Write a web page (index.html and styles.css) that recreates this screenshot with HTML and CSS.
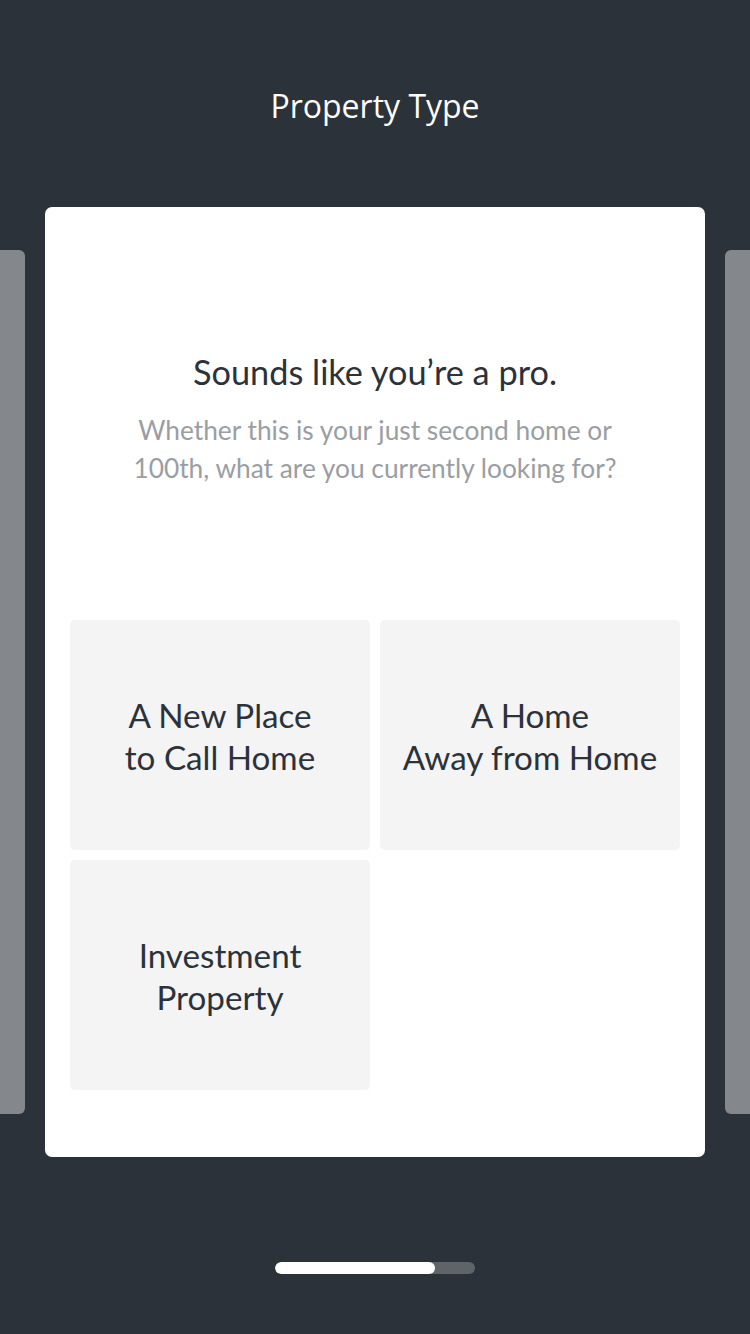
FILE: index.html
```html
<!DOCTYPE html>
<html>
<head>
<meta charset="utf-8">
<link rel="stylesheet" href="styles.css">
</head>
<body>
<div class="screen">
  <header class="topbar"><h1 class="title">Property Type</h1></header>
  <div class="carousel">
    <div class="peek peek-left"></div>
    <section class="card">
      <h2 class="heading">Sounds like you’re a pro.</h2>
      <p class="sub">Whether this is your just second home or<br>100th, what are you currently looking for?</p>
      <div class="options">
        <div class="option">A New Place<br>to Call Home</div>
        <div class="option">A Home<br>Away from Home</div>
        <div class="option">Investment<br>Property</div>
      </div>
    </section>
    <div class="peek peek-right"></div>
  </div>
  <div class="progress"><div class="progress-fill"></div></div>
</div>
</body>
</html>
```
FILE: styles.css
```css
html, body {
  margin: 0;
  padding: 0;
  background: #2c323a;
}
.screen {
  width: 750px;
  height: 1334px;
  overflow: hidden;
  background: #2c323a;
  font-family: Lato, "Open Sans", sans-serif;
}
.topbar {
  height: 207px;
  display: flex;
  justify-content: center;
  align-items: center;
}
.title {
  margin: 0;
  font-family: "Open Sans", sans-serif;
  font-weight: 400;
  font-size: 32px;
  color: #ffffff;
  transform: translateY(2px);
}
.carousel {
  display: flex;
  align-items: flex-start;
  gap: 20px;
}
.peek {
  width: 25px;
  height: 864px;
  margin-top: 43px;
  background: #84878b;
}
.peek-left { border-radius: 0 6px 6px 0; }
.peek-right { border-radius: 6px 0 0 6px; }
.card {
  width: 660px;
  height: 950px;
  box-sizing: border-box;
  background: #ffffff;
  border-radius: 7px;
  padding: 143px 25px 0;
  text-align: center;
}
.heading {
  margin: 0;
  font-weight: 400;
  font-size: 34.3px;
  line-height: 44px;
  color: #2c323a;
}
.sub {
  margin: 17px 0 0;
  font-size: 26.3px;
  line-height: 38px;
  color: #9a9ea3;
}
.options {
  margin-top: 133px;
  display: grid;
  grid-template-columns: 300px 300px;
  grid-auto-rows: 230px;
  gap: 10px;
}
.option {
  background: #f4f4f4;
  border-radius: 5px;
  display: flex;
  align-items: center;
  justify-content: center;
  padding-top: 2px;
  box-sizing: border-box;
  font-size: 33.2px;
  line-height: 42px;
  color: #2c323a;
}
.progress {
  width: 200px;
  height: 12px;
  margin: 105px auto 0;
  background: #5f6468;
  border-radius: 6px;
  overflow: hidden;
}
.progress-fill {
  width: 160px;
  height: 100%;
  background: #ffffff;
  border-radius: 6px;
}
```
